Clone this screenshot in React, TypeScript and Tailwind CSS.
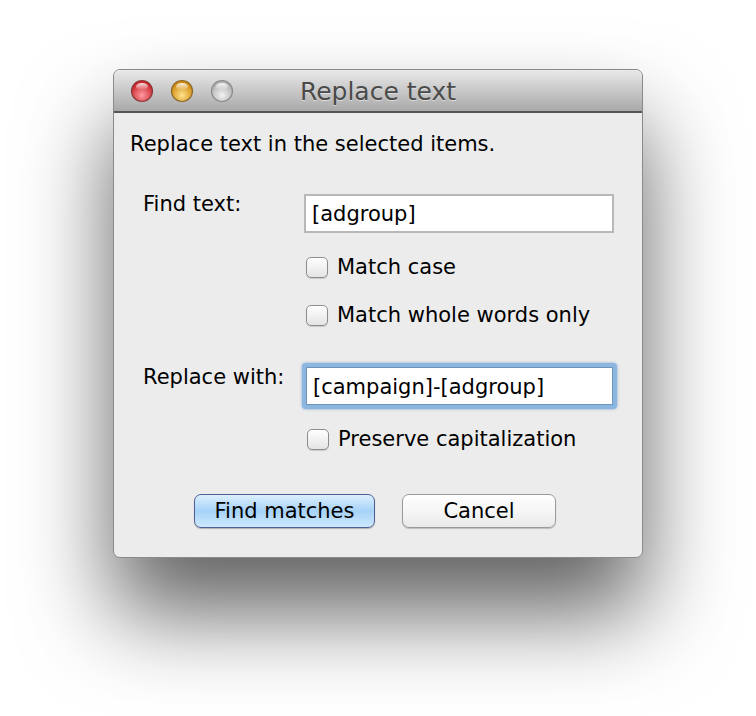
import React from 'react';

function Light({ from, to, ring }: { from: string; to: string; ring: string }) {
  return (
    <svg width="24" height="24" viewBox="0 0 24 24">
      <defs>
        <radialGradient id={`g${from}`} cx="50%" cy="70%" r="60%">
          <stop offset="0%" stopColor={to} />
          <stop offset="100%" stopColor={from} />
        </radialGradient>
        <linearGradient id={`h${from}`} x1="0" y1="0" x2="0" y2="1">
          <stop offset="0%" stopColor="#ffffff" stopOpacity="0.9" />
          <stop offset="100%" stopColor="#ffffff" stopOpacity="0" />
        </linearGradient>
      </defs>
      <circle cx="12" cy="12" r="10.5" fill={`url(#g${from})`} stroke={ring} strokeWidth="1.2" />
      <ellipse cx="12" cy="7.5" rx="6" ry="3.6" fill={`url(#h${from})`} />
    </svg>
  );
}

function Check({ label }: { label: string }) {
  return (
    <label className="flex items-center gap-[9px] h-[24px]">
      <span className="w-[22px] h-[21px] rounded-[5px] border border-[#8d8d8d] bg-gradient-to-b from-white to-[#e4e4e4] shadow-[0_1px_1px_rgba(0,0,0,0.15)]" />
      <span>{label}</span>
    </label>
  );
}

export default function App() {
  return (
    <div
      className="w-[756px] h-[716px] bg-white pt-[69px] pl-[113px] text-[21px] leading-[24px] text-black"
      style={{ fontFamily: '"DejaVu Sans", Verdana, sans-serif' }}
    >
      <div className="w-[530px] h-[489px] rounded-[7px] overflow-hidden bg-[#ececec] border border-[#8a8a8a] shadow-[0_55px_90px_rgba(0,0,0,0.62)] flex flex-col">
        {/* title bar */}
        <div className="h-[43px] shrink-0 relative flex items-center bg-gradient-to-b from-[#e9e9e9] to-[#a9a9a9] border-b-2 border-[#555]">
          <div className="flex items-center gap-[16px] pl-[16px] pt-[1px]">
            <Light from="#c8242a" to="#ff9aa0" ring="#8a3a3a" />
            <Light from="#d08a10" to="#ffe28c" ring="#8a6a2a" />
            <Light from="#b0b0b0" to="#f2f2f2" ring="#8a8a8a" />
          </div>
          <div className="absolute inset-0 flex items-center justify-center text-[25px] text-[#4a4a4a] pt-[2px] [text-shadow:0_1px_0_rgba(255,255,255,0.5)]">
            Replace text
          </div>
        </div>

        {/* body */}
        <div className="flex flex-col pl-[16px] pt-[19px]">
          <div>Replace text in the selected items.</div>

          <div className="flex mt-[36px]">
            <div className="w-[174px] pl-[13px]">Find text:</div>
            <div className="flex flex-col pt-[2px]">
              <div className="w-[310px] h-[39px] bg-white border-2 border-[#b8b8b8] flex items-center px-[6px] pt-[1px]">
                [adgroup]
              </div>
              <div className="mt-[22px] pl-[2px]">
                <Check label="Match case" />
              </div>
              <div className="mt-[24px] pl-[2px]">
                <Check label="Match whole words only" />
              </div>
            </div>
          </div>

          <div className="flex mt-[36px]">
            <div className="w-[172px] pl-[13px] pt-[2px]">Replace with:</div>
            <div className="flex flex-col">
              <div className="w-[315px] h-[46px] rounded-[4px] bg-[#8ab6df] p-[4px] shadow-[0_0_3px_rgba(90,140,200,0.7)]">
                <div className="w-full h-full bg-white border border-[#6f93bb] flex items-center px-[6px] pt-[1px]">
                  [campaign]-[adgroup]
                </div>
              </div>
              <div className="mt-[18px] pl-[5px]">
                <Check label="Preserve capitalization" />
              </div>
            </div>
          </div>

          <div className="flex gap-[27px] mt-[43px] pl-[64px]">
            <button className="w-[181px] h-[34px] rounded-[7px] border border-[#4f5f95] bg-gradient-to-b from-[#dceffe] via-[#a6d2f7] to-[#cde9fd] shadow-[0_1px_1px_rgba(0,0,0,0.25)]">
              Find matches
            </button>
            <button className="w-[154px] h-[34px] rounded-[7px] border border-[#9a9a9a] bg-gradient-to-b from-white via-[#f6f6f6] to-[#e9e9e9] shadow-[0_1px_1px_rgba(0,0,0,0.2)]">
              Cancel
            </button>
          </div>
        </div>
      </div>
    </div>
  );
}
